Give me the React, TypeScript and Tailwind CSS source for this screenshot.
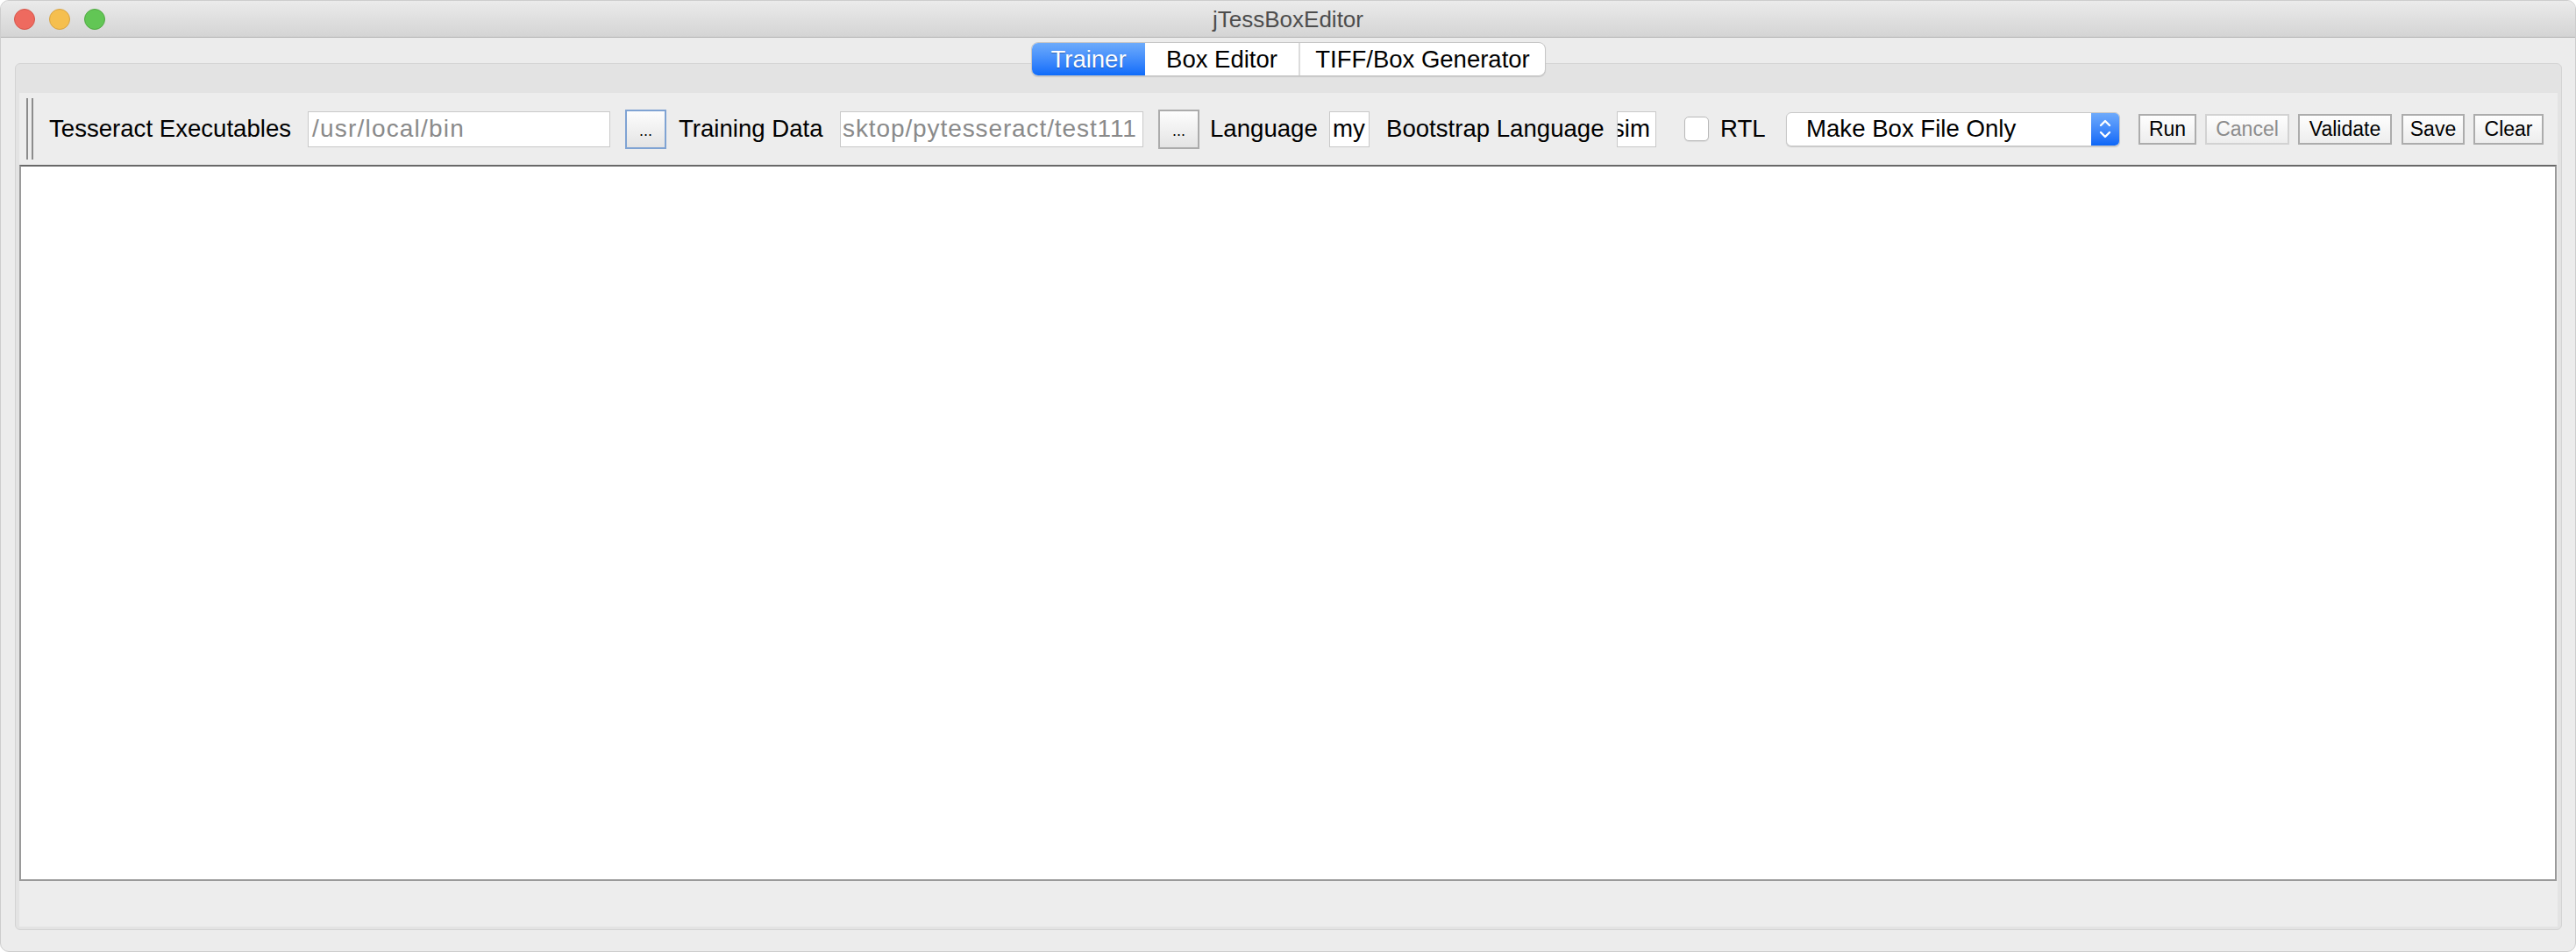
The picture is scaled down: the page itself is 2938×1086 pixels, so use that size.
import React from "react";

const font = { fontFamily: '"Liberation Sans", Arial, sans-serif' };

function DotsButton({ focused }: { focused?: boolean }) {
  return (
    <div
      className={
        "ml-[17px] w-[47px] h-[45px] flex items-end justify-center pb-[10px] border-2 bg-gradient-to-b from-[#fdfdfd] to-[#e4e4e4] text-[18px] leading-none text-black " +
        (focused ? "border-[#7fa3d3]" : "border-[#ababab]")
      }
    >
      ...
    </div>
  );
}

function ActionButton({ label, w, ml, disabled }: { label: string; w: string; ml: string; disabled?: boolean }) {
  return (
    <div
      className={
        ml +
        " " +
        w +
        " h-[35px] flex items-center justify-center border-2 bg-gradient-to-b from-[#fefefe] to-[#ededed] text-[23px] leading-none " +
        (disabled ? "border-[#d2d2d2] text-[#8c8c8c]" : "border-[#acacac] text-black")
      }
    >
      {label}
    </div>
  );
}

export default function App() {
  return (
    <div className="w-[2938px] h-[1086px] bg-white" style={font}>
      <div className="w-full h-full rounded-[10px] overflow-hidden border border-[#cdcdcd] bg-[#ececec] flex flex-col">
        {/* Title bar */}
        <div className="relative h-[42px] shrink-0 bg-gradient-to-b from-[#ebebeb] to-[#d4d4d4] border-b border-[#b2b2b2] flex items-center justify-center">
          <div className="absolute left-[15px] top-[9px] flex gap-[16px]">
            <div className="w-[24px] h-[24px] rounded-full bg-[#ee6a5f] border border-[#d4564b]" />
            <div className="w-[24px] h-[24px] rounded-full bg-[#f5bf4f] border border-[#d7a343]" />
            <div className="w-[24px] h-[24px] rounded-full bg-[#62c655] border border-[#51a943]" />
          </div>
          <span className="text-[26px] text-[#4d4d4d] leading-none">jTessBoxEditor</span>
        </div>

        {/* Body */}
        <div className="flex-1 flex flex-col pl-[16px] pr-[15px] pb-[24px]">
          {/* Tabs */}
          <div className="relative z-10 mt-[5px] flex justify-center">
            <div className="flex h-[39px] rounded-[8px] bg-white border border-[#c6c6c6] shadow-[0_1px_1px_rgba(0,0,0,0.12)] overflow-hidden text-[27.5px] leading-none">
              <div className="w-[129px] flex items-center justify-center bg-gradient-to-b from-[#6dabfb] to-[#0b6bfa] text-white [text-shadow:0_1px_1px_rgba(0,0,0,0.3)]">
                Trainer
              </div>
              <div className="w-[175px] flex items-center justify-center text-black">Box Editor</div>
              <div className="w-[281px] flex items-center justify-center text-black border-l-2 border-[#dcdcdc]">
                TIFF/Box Generator
              </div>
            </div>
          </div>

          {/* Panel */}
          <div className="-mt-[15px] flex-1 rounded-[6px] border border-[#d3d3d3] bg-[#e3e3e3] pt-[33px] px-[4px] pb-[3px] flex flex-col">
            <div className="flex-1 bg-[#ededed] flex flex-col">
              {/* Toolbar */}
              <div className="h-[82px] shrink-0 flex items-center text-[27.6px] leading-none text-black">
                <div className="ml-[8px] h-[70px] w-[8px] flex justify-between self-center">
                  <div className="w-[2px] h-full bg-[#8c8c8c]" />
                  <div className="w-[2px] h-full bg-[#8c8c8c]" />
                </div>
                <div className="ml-[18px] w-[295px] whitespace-nowrap">Tesseract Executables</div>
                <div className="w-[345px] h-[41px] bg-white border border-[#c9c9c9] flex items-center pl-[4px] text-[#8a8a8a] text-[28px] tracking-[1.2px] overflow-hidden whitespace-nowrap">
                  /usr/local/bin
                </div>
                <DotsButton focused />
                <div className="ml-[14px] w-[184px] whitespace-nowrap">Training Data</div>
                <div className="w-[346px] h-[41px] bg-white border border-[#c9c9c9] flex items-center pl-[2px] text-[#8a8a8a] text-[28px] tracking-[0.9px] overflow-hidden whitespace-nowrap">
                  sktop/pytesseract/test111
                </div>
                <DotsButton />
                <div className="ml-[12px] w-[136px] whitespace-nowrap">Language</div>
                <div className="w-[46px] h-[41px] bg-white border border-[#c9c9c9] flex items-center pl-[3px] overflow-hidden whitespace-nowrap">
                  my
                </div>
                <div className="ml-[19px] w-[263px] whitespace-nowrap">Bootstrap Language</div>
                <div className="w-[45px] h-[41px] bg-white border border-[#c9c9c9] flex items-center overflow-hidden whitespace-nowrap">
                  <span className="-ml-[6px]">sim</span>
                </div>
                <div className="ml-[32px] w-[28px] h-[28px] rounded-[5px] bg-white border border-[#b9b9b9] shadow-[0_1px_1px_rgba(0,0,0,0.08)]" />
                <div className="ml-[13px] w-[75px] whitespace-nowrap">RTL</div>
                <div className="w-[381px] h-[39px] flex rounded-[6px] bg-white border border-[#c8c8c8] shadow-[0_1px_1px_rgba(0,0,0,0.15)] overflow-hidden">
                  <div className="flex-1 flex items-center pl-[22px] whitespace-nowrap">Make Box File Only</div>
                  <div className="w-[32px] h-full bg-gradient-to-b from-[#6eaafb] to-[#0a66f7] flex items-center justify-center">
                    <svg width="16" height="26" viewBox="0 0 16 26" fill="none" stroke="white" strokeWidth="2.4" strokeLinecap="round" strokeLinejoin="round">
                      <path d="M3 9 L8 4 L13 9" />
                      <path d="M3 17 L8 22 L13 17" />
                    </svg>
                  </div>
                </div>
                <ActionButton label="Run" w="w-[66px]" ml="ml-[21px]" />
                <ActionButton label="Cancel" w="w-[96px]" ml="ml-[10px]" disabled />
                <ActionButton label="Validate" w="w-[107px]" ml="ml-[10px]" />
                <ActionButton label="Save" w="w-[72px]" ml="ml-[11px]" />
                <ActionButton label="Clear" w="w-[80px]" ml="ml-[10px]" />
              </div>

              {/* Text area */}
              <div className="h-[817px] shrink-0 mr-[1px] bg-white border-2 border-[#9a9a9a] border-t-[#686868]" />

              {/* Status area */}
              <div className="flex-1" />
            </div>
          </div>
        </div>
      </div>
    </div>
  );
}
